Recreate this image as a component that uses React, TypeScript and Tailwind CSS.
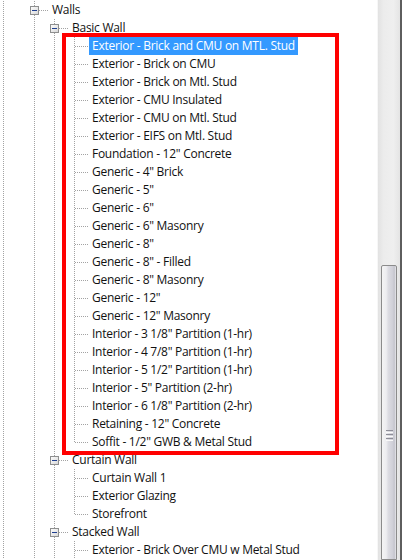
import React from 'react';

type TreeRow = {
  label: string;
  depth: number;
  expander?: boolean;
  last?: boolean;
  selected?: boolean;
};

const basicWalls = [
  'Exterior - Brick and CMU on MTL. Stud',
  'Exterior - Brick on CMU',
  'Exterior - Brick on Mtl. Stud',
  'Exterior - CMU Insulated',
  'Exterior - CMU on Mtl. Stud',
  'Exterior - EIFS on Mtl. Stud',
  'Foundation - 12" Concrete',
  'Generic - 4" Brick',
  'Generic - 5"',
  'Generic - 6"',
  'Generic - 6" Masonry',
  'Generic - 8"',
  'Generic - 8" - Filled',
  'Generic - 8" Masonry',
  'Generic - 12"',
  'Generic - 12" Masonry',
  'Interior - 3 1/8" Partition (1-hr)',
  'Interior - 4 7/8" Partition (1-hr)',
  'Interior - 5 1/2" Partition (1-hr)',
  'Interior - 5" Partition (2-hr)',
  'Interior - 6 1/8" Partition (2-hr)',
  'Retaining - 12" Concrete',
  'Soffit - 1/2" GWB & Metal Stud',
];

const rows: TreeRow[] = [
  { label: 'Walls', depth: 1, expander: true },
  { label: 'Basic Wall', depth: 2, expander: true },
  ...basicWalls.map((label, i) => ({
    label,
    depth: 3,
    selected: i === 0,
    last: i === basicWalls.length - 1,
  })),
  { label: 'Curtain Wall', depth: 2, expander: true },
  { label: 'Curtain Wall 1', depth: 3 },
  { label: 'Exterior Glazing', depth: 3 },
  { label: 'Storefront', depth: 3, last: true },
  { label: 'Stacked Wall', depth: 2, expander: true },
  { label: 'Exterior - Brick Over CMU w Metal Stud', depth: 3 },
];

const DOT = '#a3a3a3';

// vertical guide for an ancestor level
function Guide({ width, x }: { width: number; x: number }) {
  return (
    <svg width={width} height={18} className="shrink-0" shapeRendering="crispEdges">
      <line x1={x + 0.5} y1={0} x2={x + 0.5} y2={18} stroke={DOT} strokeDasharray="1 1" />
    </svg>
  );
}

// elbow from the sibling line to the label, with the collapse box when the node has children
function Connector({ last, expander }: { last?: boolean; expander?: boolean }) {
  return (
    <svg width={25} height={18} className="shrink-0" shapeRendering="crispEdges">
      <defs>
        <linearGradient id="box" x1="0" y1="0" x2="1" y2="1">
          <stop offset="0" stopColor="#ffffff" />
          <stop offset="1" stopColor="#d6d6d6" />
        </linearGradient>
      </defs>
      <line x1={10.5} y1={0} x2={10.5} y2={last ? 10 : 18} stroke={DOT} strokeDasharray="1 1" />
      <line x1={expander ? 15 : 11} y1={9.5} x2={25} y2={9.5} stroke={DOT} strokeDasharray="1 1" />
      {expander && (
        <>
          <rect x={6.5} y={5.5} width={8} height={8} fill="url(#box)" stroke="#8e8f8f" />
          <line x1={8} y1={9.5} x2={13} y2={9.5} stroke="#1f3f8f" />
        </>
      )}
    </svg>
  );
}

function Row({ row }: { row: TreeRow }) {
  return (
    <div className="flex h-[18px] items-center">
      <Guide width={24} x={3} />
      {row.depth >= 2 && <Guide width={20} x={10} />}
      {row.depth >= 3 && <Guide width={20} x={10} />}
      <Connector last={row.last} expander={row.expander} />
      <span
        className={
          row.selected
            ? 'h-[18px] whitespace-nowrap bg-[#3399ff] px-[3px] leading-[18px] text-white'
            : 'h-[18px] whitespace-nowrap px-[3px] leading-[18px] text-[#111111]'
        }
      >
        {row.label}
      </span>
    </div>
  );
}

function Scrollbar() {
  return (
    <div className="flex w-[25px] shrink-0">
      <div className="flex w-[23px] flex-col border-l border-[#f7f7f7] bg-[linear-gradient(to_right,#e2e2e2,#ececec_25%,#efefef_70%,#e4e4e4)]">
        <div className="h-[265px] shrink-0" />
        <div className="ml-[3px] flex w-[16px] flex-1 flex-col items-center rounded-t-[2px] border border-[#8b8b8b] bg-[linear-gradient(to_right,#f4f4f4,#ededf0_30%,#dcdce2_45%,#d0d0d8_75%,#c5c5cd_88%,#e8e8ec)] pt-[164px]">
          <div className="flex flex-col gap-[1px]">
            <div className="h-[1px] w-[7px] bg-[#8e8e98]" />
            <div className="h-[1px] w-[7px] bg-[#fafafa]" />
            <div className="h-[1px] w-[7px] bg-[#8e8e98]" />
            <div className="h-[1px] w-[7px] bg-[#fafafa]" />
            <div className="h-[1px] w-[7px] bg-[#8e8e98]" />
            <div className="h-[1px] w-[7px] bg-[#fafafa]" />
          </div>
        </div>
      </div>
      <div className="w-[2px] bg-[#5e5e5e]" />
    </div>
  );
}

export default function App() {
  return (
    <div className="relative flex h-[560px] w-[402px] overflow-hidden bg-white font-['Open_Sans',sans-serif] text-[12px] tracking-[-0.27px]">
      <div className="flex-1 pt-[1px]">
        {rows.map((row, i) => (
          <Row key={i} row={row} />
        ))}
      </div>
      <Scrollbar />
      {/* red callout around the Basic Wall types */}
      <div className="pointer-events-none absolute left-[62px] top-[33px] h-[422px] w-[277px] border-4 border-[#ff0000]" />
    </div>
  );
}
